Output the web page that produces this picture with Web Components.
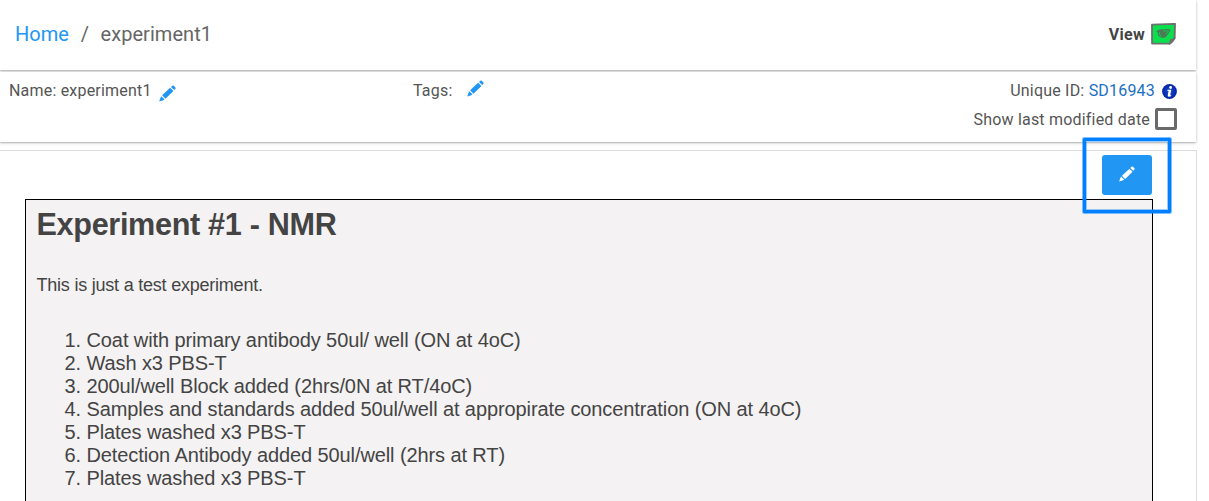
<!DOCTYPE html>
<html lang="en">
<head>
<meta charset="utf-8">
<title>experiment1</title>
<style>
  html, body { margin: 0; height: 100%; overflow: hidden; background: #fff; }
  body { font-family: Roboto, sans-serif; color: #555; }
</style>
</head>
<body>
<experiment-page></experiment-page>
<script>
// --- Pencil icon ---
class PencilIcon extends HTMLElement {
  constructor() {
    super();
    this.attachShadow({ mode: 'open' });
    this.shadowRoot.innerHTML = `
      <style>
        :host { display: block; width: 17px; height: 17px; color: #2196f3; }
        svg { display: block; width: 100%; height: 100%; }
      </style>
      <svg viewBox="0 0 17 17" fill="currentColor">
        <path d="M12 2 13.3.7Q14 .1 14.8.8L16.4 2.4Q17 3.1 16.4 3.8L15.2 5Z"/>
        <path d="M11.1 2.8 14.4 6 6.5 13.7 3.1 10.3Z"/>
        <path d="M2.3 11.2 5.6 14.5 3.6 15.4 .2 16.6 1.2 13.4Z"/>
      </svg>
    `;
  }
}
customElements.define('pencil-icon', PencilIcon);

// --- View icon ---
class ViewIcon extends HTMLElement {
  constructor() {
    super();
    this.attachShadow({ mode: 'open' });
    this.shadowRoot.innerHTML = `
      <style>
        :host { display: block; width: 25px; height: 22px; }
        svg { display: block; }
      </style>
      <svg width="25" height="22" viewBox="0 0 25 22">
        <path d="M1 1.6 24 .9 23.6 15.4 18.6 20.6 1.1 20.6Z" fill="#0ae04e" stroke="#6d7270" stroke-width="1.9" stroke-linejoin="round"/>
        <path d="M24.6 14.6Q21.5 15.6 19.2 16.2L17.6 21.6H19Q22.8 19.5 24.6 14.6Z" fill="#6d7270"/>
        <path d="M5.2 8.4Q8.5 5.6 12 6.4 15.8 5.5 19.6 6.4 19 9.6 16.6 11.4 15 15 11.4 14.8 6.8 14 6.6 9.4Z" fill="#4b7a56"/>
        <path d="M8.3 9.2Q7.8 12.4 10.6 13.2M12.6 8.4Q15.4 7.4 17.6 8 16.6 10.4 14.6 10.8" fill="none" stroke="#16c950" stroke-width="1"/>
      </svg>
    `;
  }
}
customElements.define('view-icon', ViewIcon);

// --- Info badge ---
class InfoIcon extends HTMLElement {
  constructor() {
    super();
    this.attachShadow({ mode: 'open' });
    this.shadowRoot.innerHTML = `
      <style>
        :host { display: block; width: 15px; height: 15px; }
        svg { display: block; }
      </style>
      <svg width="15" height="15" viewBox="0 0 15 15">
        <defs>
          <radialGradient id="shade" cx=".5" cy=".5" r=".6">
            <stop offset="0" stop-color="#164fd8"/>
            <stop offset="1" stop-color="#001a96"/>
          </radialGradient>
        </defs>
        <circle cx="7.5" cy="7.5" r="7.4" fill="url(#shade)"/>
        <circle cx="8.6" cy="3.5" r="1.4" fill="#fff"/>
        <path d="M5.6 5.8H9.3L8.2 11.2H9.3L9 12.3Q5.5 13.4 5.7 11.4L6.6 6.9H5.4Z" fill="#fff"/>
      </svg>
    `;
  }
}
customElements.define('info-icon', InfoIcon);

// --- White bar with a soft bottom edge ---
class ShadowBar extends HTMLElement {
  constructor() {
    super();
    this.attachShadow({ mode: 'open' });
    this.shadowRoot.innerHTML = `
      <style>
        :host {
          display: flex;
          justify-content: space-between;
          box-sizing: border-box;
          background: #fff;
          box-shadow: 0 1px 3px rgba(0,0,0,0.24), 0 1px 1px rgba(0,0,0,0.1);
        }
      </style>
      <slot></slot>
    `;
  }
}
customElements.define('shadow-bar', ShadowBar);

// --- Edit button with its highlight frame ---
class EditButton extends HTMLElement {
  constructor() {
    super();
    this.attachShadow({ mode: 'open' });
    this.shadowRoot.innerHTML = `
      <style>
        :host { display: block; position: relative; width: 50px; height: 40px; }
        button {
          display: flex; align-items: center; justify-content: center;
          width: 50px; height: 40px; padding: 0 0 3px;
          border: 0; border-radius: 3px; background: #2196f3; cursor: pointer;
        }
        pencil-icon { color: #fff; width: 16px; height: 16px; }
        .frame {
          position: absolute; left: -19px; top: -17px;
          width: 88px; height: 75px; box-sizing: border-box;
          border: 3px solid #0080ff; border-radius: 1px; pointer-events: none;
          box-shadow: 0 0 0 1px rgba(0,128,255,0.5), inset 0 0 0 1px rgba(0,128,255,0.4);
        }
      </style>
      <button aria-label="Edit"><pencil-icon></pencil-icon></button>
      <div class="frame"></div>
    `;
  }
}
customElements.define('edit-button', EditButton);

// --- Document body ---
class ExperimentDocument extends HTMLElement {
  constructor() {
    super();
    this.attachShadow({ mode: 'open' });
    this.steps = [
      'Coat with primary antibody 50ul/ well (ON at 4oC)',
      'Wash x3 PBS-T',
      '200ul/well Block added (2hrs/0N at RT/4oC)',
      'Samples and standards added 50ul/well at appropirate concentration (ON at 4oC)',
      'Plates washed x3 PBS-T',
      'Detection Antibody added 50ul/well (2hrs at RT)',
      'Plates washed x3 PBS-T'
    ];
    this.shadowRoot.innerHTML = `
      <style>
        :host {
          display: block; box-sizing: border-box; height: 320px;
          padding: 4px 10.5px; border: 1px solid #000; background: #f4f2f3;
          font-family: "Liberation Sans", Arial, sans-serif; color: #444;
        }
        h1 { margin: 0; font-size: 30.6px; line-height: 40px; letter-spacing: -0.32px; }
        p { margin: 30px 0 0; font-size: 18px; line-height: 22px; letter-spacing: -0.22px; }
        ol { margin: 33px 0 0; padding-left: 50px; font-size: 20px; line-height: 23px; letter-spacing: -0.1px; }
      </style>
      <h1>Experiment #1 - NMR</h1>
      <p>This is just a test experiment.</p>
      <ol>${this.steps.map(s => `<li>${s}</li>`).join('')}</ol>
    `;
  }
}
customElements.define('experiment-document', ExperimentDocument);

// --- Page ---
class ExperimentPage extends HTMLElement {
  constructor() {
    super();
    this.attachShadow({ mode: 'open' });
    this.shadowRoot.innerHTML = `
      <style>
        :host { display: block; width: 1196px; height: 501px; font-size: 16px; letter-spacing: 0.2px; }
        a { color: #2196f3; text-decoration: none; }
        .top { height: 70px; margin-bottom: 2px; padding: 0 20px 2px 15px; align-items: center; }
        .crumbs { display: flex; gap: 11.6px; font-size: 20px; line-height: 24px; letter-spacing: 0.05px; color: #666; }
        .view { display: flex; align-items: center; gap: 6px; font-weight: 700; letter-spacing: 0.3px; color: #444; }
        .meta { height: 70px; padding: 9px 19px 0 9px; line-height: 20px; }
        .field { display: flex; }
        .name { width: 404px; gap: 7.5px; }
        .name pencil-icon { margin-top: 4px; }
        .tags { gap: 15px; flex: 1; }
        .tags pencil-icon { margin-top: -1px; }
        .info { display: flex; flex-direction: column; align-items: flex-end; gap: 7px; }
        .row { display: flex; align-items: center; gap: 5px; height: 22px; }
        .row span { padding-top: 1px; }
        .uid { height: 20px; gap: 7px; }
        .uid span { padding: 0; }
        .uid a { color: #1a6fc4; }
        .box { box-sizing: border-box; width: 22px; height: 22px; border: 3px solid #6a6a6a; border-radius: 2px; }
        .content { box-sizing: border-box; width: 1197px; height: 360px; margin-top: 8px; padding: 4px 43px 0 25px; border: solid #ddd; border-width: 1px 1px 0 0; }
        .tools { display: flex; justify-content: flex-end; position: relative; z-index: 1; height: 44px; padding-right: 1px; }
      </style>
      <shadow-bar class="top">
        <nav class="crumbs"><a href="#">Home</a><span>/</span><span>experiment1</span></nav>
        <div class="view"><span>View</span><view-icon></view-icon></div>
      </shadow-bar>
      <shadow-bar class="meta">
        <div class="field name"><span>Name: experiment1</span><pencil-icon></pencil-icon></div>
        <div class="field tags"><span>Tags:</span><pencil-icon></pencil-icon></div>
        <div class="info">
          <div class="row uid"><span>Unique ID: <a href="#">SD16943</a></span><info-icon></info-icon></div>
          <div class="row"><span>Show last modified date</span><div class="box"></div></div>
        </div>
      </shadow-bar>
      <div class="content">
        <div class="tools"><edit-button></edit-button></div>
        <experiment-document></experiment-document>
      </div>
    `;
  }
}
customElements.define('experiment-page', ExperimentPage);
</script>
</body>
</html>
